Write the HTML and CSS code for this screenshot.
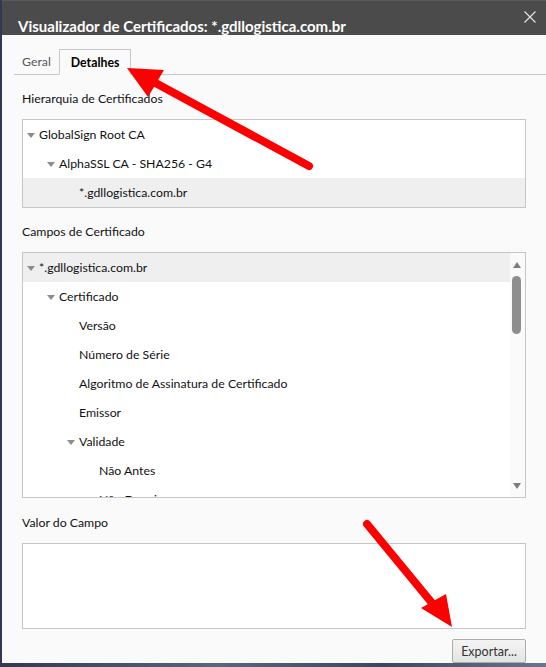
FILE: index.html
```html
<!DOCTYPE html>
<html lang="pt-BR">
<head>
<meta charset="utf-8">
<title>Visualizador de Certificados</title>
<link rel="stylesheet" href="styles.css">
</head>
<body>
<div class="window">
  <div class="titlebar">
    <span class="title">Visualizador de Certificados: *.gdllogistica.com.br</span>
    <svg class="close" width="12" height="12" viewBox="0 0 12 12"><path d="M0.5 0.5 L11.5 11.5 M11.5 0.5 L0.5 11.5" stroke="#e6e6e6" stroke-width="1.1" fill="none"/></svg>
  </div>
  <div class="tabs">
    <div class="tab">Geral</div>
    <div class="tab active">Detalhes</div>
    <div class="tab-fill"></div>
  </div>
  <div class="content">
    <div class="label first">Hierarquia de Certificados</div>
    <div class="box tree">
      <div class="row l0"><span class="tw"></span>GlobalSign Root CA</div>
      <div class="row l1"><span class="tw"></span>AlphaSSL CA - SHA256 - G4</div>
      <div class="row l2 sel"><span class="tw none"></span>*.gdllogistica.com.br</div>
    </div>
    <div class="label second">Campos de Certificado</div>
    <div class="box fields">
      <div class="list">
        <div class="row l0 sel"><span class="tw"></span>*.gdllogistica.com.br</div>
        <div class="row l1"><span class="tw"></span>Certificado</div>
        <div class="row l2"><span class="tw none"></span>Versão</div>
        <div class="row l2"><span class="tw none"></span>Número de Série</div>
        <div class="row l2"><span class="tw none"></span>Algoritmo de Assinatura de Certificado</div>
        <div class="row l2"><span class="tw none"></span>Emissor</div>
        <div class="row l2"><span class="tw"></span>Validade</div>
        <div class="row l3"><span class="tw none"></span>Não Antes</div>
        <div class="row l3"><span class="tw none"></span>Não Depois</div>
      </div>
      <div class="scrollbar">
        <span class="sarrow up"></span>
        <span class="thumb"></span>
        <span class="sarrow down"></span>
      </div>
    </div>
    <div class="label">Valor do Campo</div>
    <div class="box value"></div>
    <div class="actions">
      <button class="btn">Exportar...</button>
    </div>
  </div>
  <svg class="arrows" width="546" height="667" viewBox="0 0 546 667">
    <line x1="309" y1="166" x2="150" y2="80" stroke="#ff0000" stroke-width="8" stroke-linecap="round"/>
    <polygon points="127,68 164,70 148,97" fill="#ff0000"/>
    <line x1="367" y1="524" x2="432" y2="603" stroke="#ff0000" stroke-width="8" stroke-linecap="round"/>
    <polygon points="452,627 421,608 446,594" fill="#ff0000"/>
  </svg>
</div>
</body>
</html>
```
FILE: styles.css
```css
* { box-sizing: border-box; }
html, body { margin: 0; padding: 0; }
body {
  width: 546px;
  height: 667px;
  overflow: hidden;
  background: linear-gradient(90deg, #2f3a52 0%, #5a6680 40%, #3b4760 70%, #6a7590 100%);
  font-family: Lato, "Open Sans", sans-serif;
  font-size: 12.3px;
  color: #111;
  padding-left: 2px;
}
.window {
  position: relative;
  height: 663px;
  background: #fafafa;
  display: flex;
  flex-direction: column;
}
.titlebar {
  height: 35px;
  background: #4b4b4b;
  border-top: 1px solid #5a5a5a;
  display: flex;
  align-items: flex-start;
  justify-content: space-between;
  padding: 16px 10px 0 16px;
  flex-shrink: 0;
}
.title {
  color: #fff;
  font-weight: 700;
  font-size: 15px;
  line-height: 18px;
}
.close { margin-top: -6px; }
.tabs {
  display: flex;
  align-items: flex-end;
  height: 40px;
  padding-left: 12px;
  flex-shrink: 0;
}
.tab {
  height: 26px;
  line-height: 25px;
  padding: 0 8px;
  color: #555;
  border-bottom: 1px solid #c8c8c8;
}
.tab.active {
  color: #000;
  font-weight: 700;
  border: 1px solid #c8c8c8;
  border-bottom: 1px solid transparent;
  background: #fafafa;
  padding: 0 11px;
}
.tab-fill {
  flex: 1;
  border-bottom: 1px solid #c8c8c8;
}
.content {
  padding: 0 20px 0 20px;
  display: flex;
  flex-direction: column;
  flex: 1;
}
.label {
  height: 16px;
  line-height: 16px;
  margin-top: 17px;
  margin-bottom: 12px;
  color: #111;
}
.label.first { margin-top: 16px; }
.label.second { margin-top: 16px; }
.box {
  border: 1px solid #c6c6c6;
  background: #fff;
}
.row {
  height: 29px;
  display: flex;
  align-items: center;
  white-space: nowrap;
  padding-left: 4px;
}
.row.sel { background: #efefef; }
.row.l1 { padding-left: 24px; }
.row.l2 { padding-left: 44px; }
.row.l3 { padding-left: 64px; }
.tw {
  width: 12px;
  height: 29px;
  flex-shrink: 0;
  position: relative;
}
.tw::before {
  content: "";
  position: absolute;
  left: 0;
  top: 13px;
  border-left: 4px solid transparent;
  border-right: 4px solid transparent;
  border-top: 5px solid #8c8c8c;
}
.tw.none::before { display: none; }
.tree { height: 89px; }
.fields {
  height: 246px;
  display: flex;
  overflow: hidden;
}
.list { flex: 1; }
.scrollbar {
  width: 15px;
  background: #fafafa;
  position: relative;
  flex-shrink: 0;
}
.sarrow {
  position: absolute;
  left: 3px;
  border-left: 4px solid transparent;
  border-right: 4px solid transparent;
}
.sarrow.up { top: 9px; border-bottom: 6px solid #7c7c7c; }
.sarrow.down { bottom: 8px; border-top: 6px solid #7c7c7c; }
.thumb {
  position: absolute;
  left: 2px;
  top: 23px;
  width: 9px;
  height: 58px;
  border-radius: 5px;
  background: #8e8e8e;
}
.value { height: 86px; }
.actions {
  display: flex;
  justify-content: flex-end;
  margin-top: 10px;
}
.btn {
  width: 74px;
  height: 24px;
  border: 1px solid #adadad;
  border-radius: 2px;
  background: linear-gradient(#f4f4f4, #e4e4e4);
  font-family: Lato, "Open Sans", sans-serif;
  font-size: 12.5px;
  color: #333;
  padding: 0;
}
.arrows {
  position: absolute;
  left: -2px;
  top: 0;
  pointer-events: none;
}
```
